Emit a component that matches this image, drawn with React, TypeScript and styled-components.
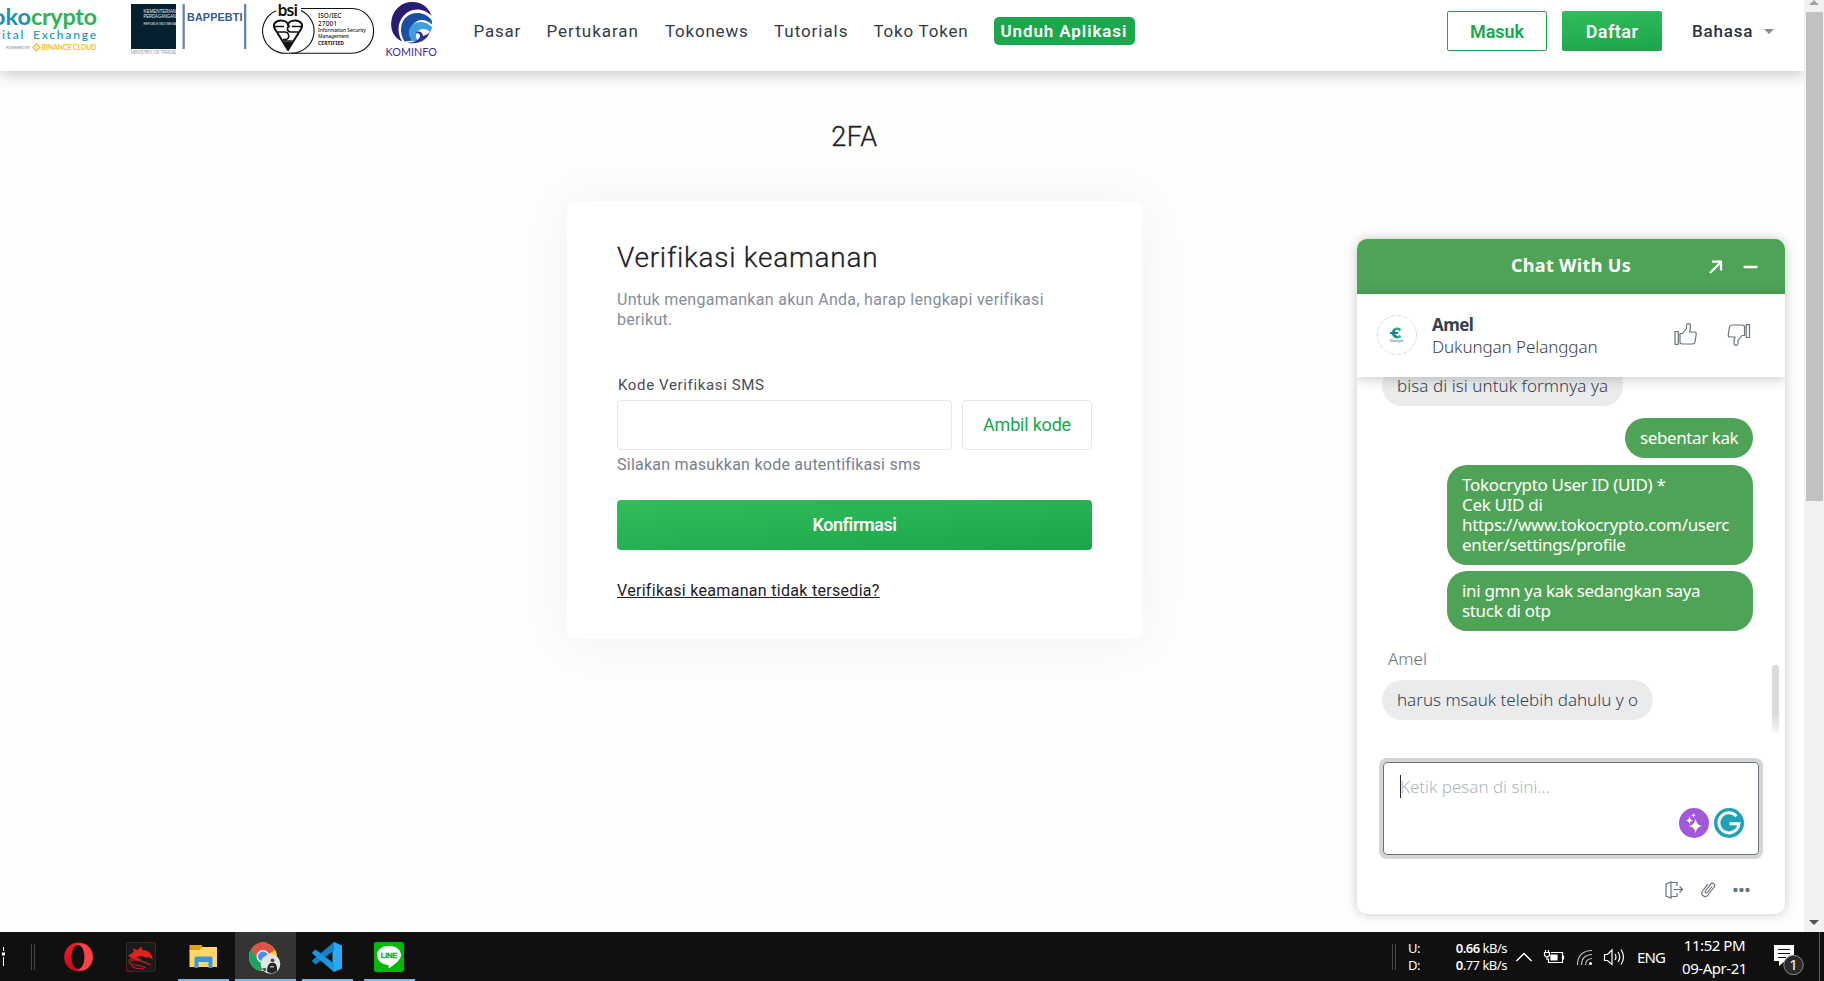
import React from "react";
import styled, { createGlobalStyle } from "styled-components";

const Global = createGlobalStyle`
  * { box-sizing: border-box; }
  body { margin: 0; background: #fefefe; overflow: hidden; }
`;

const sans = `Roboto, "Liberation Sans", sans-serif`;
const chatSans = `"Noto Sans", "Open Sans", sans-serif`;

const Screen = styled.div`
  width: 1824px;
  height: 981px;
  display: flex;
  flex-direction: column;
  font-family: ${sans};
  overflow: hidden;
`;

const Viewport = styled.div`
  position: relative;
  height: 932px;
  display: flex;
`;

const Page = styled.div`
  width: 1804px;
  overflow: hidden;
  background: #fefefe;
`;

/* ---------- header ---------- */

const Header = styled.header`
  position: relative;
  height: 71px;
  padding-right: 30px;
  display: flex;
  align-items: flex-start;
  background: #fff;
  box-shadow: 0 2px 16px rgba(0, 0, 0, 0.26);
`;

const Logos = styled.div`
  width: 473.5px;
  height: 62px;
  flex: none;
  display: flex;
`;

const LogoArt = styled.svg`
  flex: none;
  display: block;
  height: 62px;
`;

const Nav = styled.nav`
  height: 61px;
  flex: 1;
  display: flex;
  align-items: center;
`;

const NavLink = styled.a<{ $w: number; $ls: number }>`
  width: ${(p) => p.$w}px;
  flex: none;
  white-space: nowrap;
  font-size: 17px;
  letter-spacing: ${(p) => p.$ls}px;
  color: #343b49;
`;

const DownloadLink = styled.a`
  width: 141px;
  height: 28px;
  line-height: 28px;
  margin-top: 1px;
  padding-left: 7px;
  border-radius: 5px;
  background: #1ba74b;
  color: #fff;
  font-size: 17px;
  font-weight: 600;
  letter-spacing: 0.9px;
  white-space: nowrap;
`;

const Account = styled.div`
  height: 62px;
  display: flex;
  align-items: center;
`;

const AccountButton = styled.button<{ $solid?: boolean }>`
  width: 100px;
  height: 40px;
  margin-right: 15px;
  padding: 0;
  font: 600 18px ${sans};
  letter-spacing: ${(p) => (p.$solid ? "0.45px" : "0")};
  border-radius: 2px;
  border: ${(p) => (p.$solid ? "0" : "1px solid #1ba74b")};
  background: ${(p) => (p.$solid ? "linear-gradient(175deg, #31bd5b, #1ba54a)" : "#fff")};
  color: ${(p) => (p.$solid ? "#fff" : "#1ba74b")};
`;

const Language = styled.div`
  width: 82px;
  margin-left: 15px;
  display: flex;
  align-items: center;
  justify-content: space-between;
  font-size: 17px;
  font-weight: 500;
  letter-spacing: 0.8px;
  color: #2b3240;
`;

const Caret = styled.span`
  border: 5px solid transparent;
  border-top-color: #848e9c;
  border-bottom: 0;
`;

/* ---------- verification form ---------- */

const Content = styled.main`
  padding: 48px 95px 0 0;
  display: flex;
  flex-direction: column;
  align-items: center;
`;

const PageTitle = styled.h1`
  margin: 0 0 45px;
  font-size: 27px;
  line-height: 37px;
  font-weight: 300;
  letter-spacing: 0.5px;
  color: #1e2026;
  -webkit-text-stroke: 0.35px #1e2026;
`;

const Card = styled.section`
  width: 575px;
  height: 438px;
  padding: 39px 50px 0;
  border-radius: 7px;
  background: #fff;
  box-shadow: 0 2px 56px rgba(71, 77, 102, 0.08);
`;

const CardTitle = styled.h2`
  margin: 0;
  font-size: 28px;
  line-height: 36px;
  font-weight: 300;
  letter-spacing: 0.75px;
  color: #1e2026;
  -webkit-text-stroke: 0.3px #1e2026;
  font-feature-settings: "liga" 0;
`;

const Description = styled.p`
  margin: 14px 0 46px;
  font-size: 16px;
  line-height: 20px;
  letter-spacing: 0.31px;
  color: #848e9c;
`;

const FieldLabel = styled.label`
  display: block;
  margin: 0 0 5px 1px;
  font-size: 15px;
  line-height: 19px;
  letter-spacing: 0.64px;
  color: #474d57;
`;

const FieldRow = styled.div`
  display: flex;
  gap: 10px;
`;

const CodeInput = styled.input`
  width: 335px;
  height: 50px;
  border: 1px solid #e6e6e8;
  border-radius: 4px;
  background: #fff;
`;

const CodeButton = styled.button`
  width: 130px;
  height: 50px;
  padding: 0 0 2px;
  border: 1px solid #e6e6e8;
  border-radius: 4px;
  background: #fff;
  color: #1ba74b;
  font: 400 18px ${sans};
  letter-spacing: -0.2px;
`;

const Hint = styled.p`
  margin: 5px 0 25px;
  font-size: 16px;
  line-height: 20px;
  letter-spacing: 0.25px;
  color: #76808f;
`;

const ConfirmButton = styled.button`
  display: block;
  width: 475px;
  height: 50px;
  border: 0;
  border-radius: 4px;
  padding: 0 0 1px;
  background: linear-gradient(175deg, #31bd5b, #1ba54a);
  color: #fff;
  font: 600 18px ${sans};
  letter-spacing: -0.4px;
`;

const HelpLink = styled.a`
  display: inline-block;
  margin-top: 31px;
  font-size: 16px;
  line-height: 20px;
  letter-spacing: 0.3px;
  color: #1e2026;
  text-decoration: underline;
  text-decoration-skip-ink: none;
  text-decoration-thickness: 1px;
  text-underline-offset: 1px;
`;

/* ---------- browser scroll bar ---------- */

const ScrollBar = styled.aside`
  width: 20px;
  display: flex;
  flex-direction: column;
  align-items: center;
  background: #f1f1f1;
`;

const ScrollArrow = styled.span<{ $down?: boolean }>`
  border: 5px solid transparent;
  border-top: ${(p) => (p.$down ? "5px solid #505050" : "0")};
  border-bottom: ${(p) => (p.$down ? "0" : "5px solid #a3a3a3")};
  margin: ${(p) => (p.$down ? "auto 0 7px" : "0 0 7px")};
`;

const ScrollThumb = styled.span`
  width: 17px;
  height: 489px;
  margin-left: 1px;
  background: #c1c1c1;
`;

/* ---------- chat widget ---------- */

const Chat = styled.section`
  position: absolute;
  left: 1357px;
  top: 239px;
  width: 428px;
  height: 675px;
  display: flex;
  flex-direction: column;
  border-radius: 10px;
  overflow: hidden;
  background: #fff;
  font-family: ${chatSans};
  box-shadow: 0 0 12px rgba(0, 0, 0, 0.22);
`;

const ChatHeader = styled.header`
  height: 55px;
  flex: none;
  display: grid;
  grid-template-columns: 1fr auto 1fr;
  background: #4fa356;
  color: #fff;
`;

const ChatTitle = styled.h3`
  grid-column: 2;
  margin: 0;
  font-size: 18px;
  line-height: 52px;
  font-weight: 700;
  letter-spacing: 0.33px;
`;

const ChatControls = styled.div`
  display: flex;
  align-items: center;
  justify-content: flex-end;
  gap: 20px;
  padding-right: 27px;
`;

const AgentBar = styled.div`
  position: relative;
  z-index: 1;
  height: 83px;
  flex: none;
  display: flex;
  padding: 20px 34px 0 20px;
  background: #fff;
  box-shadow: 0 2px 12px rgba(0, 0, 0, 0.22);
`;

const Avatar = styled.svg`
  width: 40px;
  height: 40px;
  margin: 1px 15px 0 0;
`;

const AgentText = styled.div`
  flex: 1;
  font-size: 17px;
  line-height: 22px;
  color: #36414d;
`;

const AgentName = styled.div`
  font-weight: 700;
  letter-spacing: -0.6px;
`;

const AgentRole = styled.div`
  height: 20.5px;
  overflow: hidden;
  font-weight: 300;
  letter-spacing: -0.08px;
`;

const Votes = styled.div`
  display: flex;
  gap: 29px;
  padding-top: 9px;
`;

const Icon = styled.svg`
  display: block;
  flex: none;
`;

const Messages = styled.div`
  position: relative;
  height: 365px;
  flex: none;
  padding: 0 32px 0 25px;
  display: flex;
  flex-direction: column;
  overflow: hidden;
`;

const Bubble = styled.div<{ $mine?: boolean; $w: number; $top: number; $ls: number }>`
  flex: none;
  align-self: ${(p) => (p.$mine ? "flex-end" : "flex-start")};
  width: ${(p) => p.$w}px;
  margin-top: ${(p) => p.$top}px;
  padding: 10px 0 10px 15px;
  border-radius: 20px;
  background: ${(p) => (p.$mine ? "#4fa356" : "#e9ebed")};
  color: ${(p) => (p.$mine ? "#fff" : "#36414d")};
  font-size: 17px;
  line-height: 20px;
  font-weight: ${(p) => (p.$mine ? 400 : 300)};
  letter-spacing: ${(p) => p.$ls}px;
  white-space: nowrap;
`;

const Sender = styled.div`
  margin: 18px 0 11px 6px;
  flex: none;
  font-size: 17px;
  line-height: 20px;
  font-weight: 300;
  letter-spacing: 0;
  color: #68737d;
`;

const ChatThumb = styled.span`
  position: absolute;
  left: 415px;
  top: 288px;
  width: 7px;
  height: 67px;
  border-radius: 3px;
  background: linear-gradient(#d8dcde 75%, #f4f5f6);
`;

const Composer = styled.div`
  height: 93px;
  flex: none;
  margin: 20px 26px 0;
  padding: 12px 15px 0 16px;
  display: flex;
  flex-direction: column;
  border: 1px solid #68737d;
  border-radius: 4px;
  box-shadow: 0 0 0 4px #d4d5d5;
`;

const Placeholder = styled.div`
  height: 23px;
  border-left: 1px solid #222b33;
  text-indent: -1px;
  font-size: 17px;
  line-height: 24px;
  font-weight: 300;
  letter-spacing: -0.02px;
  color: #aeb6bc;
`;

const Assistants = styled.div`
  display: flex;
  justify-content: flex-end;
  gap: 5px;
  margin: 10px -1px 0 0;
`;

const ChatFooter = styled.footer`
  flex: 1;
  display: flex;
  justify-content: flex-end;
  align-items: center;
  gap: 17px;
  padding: 10px 35px 0 0;
`;

/* ---------- task bar ---------- */

const TaskBar = styled.footer`
  height: 49px;
  display: flex;
  background: #101010;
  color: #fff;
  font-family: ${chatSans};
`;

const TaskEdge = styled.div`
  width: 48.5px;
`;

const Apps = styled.div`
  flex: 1;
  display: flex;
  gap: 1px;
`;

const TaskApp = styled.div<{ $active?: boolean; $run?: boolean }>`
  width: 61px;
  height: 49px;
  display: flex;
  flex-direction: column;
  align-items: center;
  justify-content: space-between;
  padding-top: 10px;
  background: ${(p) => (p.$active ? "#343434" : "transparent")};

  &::after {
    content: "";
    width: ${(p) => (p.$active ? 61 : 51)}px;
    height: 2px;
    background: ${(p) => (p.$run ? "#76b9ed" : "transparent")};
  }
`;

const Tray = styled.div`
  width: 436px;
  display: flex;
  align-items: center;
  padding-top: 1px;

  > * { flex: none; }
`;

const TrayGrip = styled.span`
  width: 4px;
  height: 26px;
  margin: 0 12px 1px 4px;
  border: solid #484848;
  border-width: 0 1px;
`;

const Net = styled.dl`
  width: 99px;
  margin: 0 9px 0 0;
  display: grid;
  grid-template-columns: 1fr auto;
  font-size: 13px;
  line-height: 17px;
  letter-spacing: -0.5px;

  dt, dd { margin: 0; }
  b { font-weight: 600; }
`;

const TrayIcons = styled.svg`
  width: 110px;
  height: 24px;
  margin-right: 11px;
`;

const Lang = styled.span`
  width: 43px;
  font-size: 15px;
  letter-spacing: -0.9px;
`;

const Clock = styled.div`
  width: 69px;
  text-align: center;
  font-size: 15px;
  line-height: 23px;
  letter-spacing: -0.45px;
  white-space: nowrap;
`;

const Notifications = styled.svg`
  width: 34px;
  height: 36px;
  margin: 0 0 1px 24px;
`;

const DesktopEdge = styled.span`
  width: 1px;
  height: 49px;
  margin: -1px 0 0 12px;
  background: #5a5a5a;
`;

const Tokocrypto = () => (
  <LogoArt width="115" viewBox="0 0 115 62" fontFamily="Lato, sans-serif">
    <text x="31" y="25" textAnchor="end" fontSize="23.5" fontWeight="700" fill="#1b92b3">toko</text>
    <text x="31" y="25" textLength="66" fontSize="23.5" fontWeight="700" fill="#2db555">crypto</text>
    <text x="25" y="38.5" textAnchor="end" fontSize="12" fontWeight="600" letterSpacing="1.7" fill="#2c9dbb">Digital</text>
    <text x="33" y="38.5" textLength="63" fontSize="12" fontWeight="600" fill="#2c9dbb">Exchange</text>
    <text x="6" y="49" textLength="24" fontSize="4" fill="#888">POWERED BY</text>
    <g fill="none" stroke="#f5bd2c" strokeWidth="1.3">
      <path d="M36.5 44 40 47.4 36.5 50.8 33 47.4z" />
      <path d="M36.5 46.7v1.4" />
    </g>
    <text x="41.5" y="50" textLength="55" fontSize="6.8" fontWeight="700" fill="#f5bd2c">BINANCE CLOUD</text>
  </LogoArt>
);

const Bappebti = () => (
  <LogoArt width="145" viewBox="115 0 145 62" fontFamily="Liberation Sans, sans-serif">
    <path d="M131 4h45v45h-45z" fill="#052130" />
    <g fill="#e5edf0">
      <text x="143.5" y="13.3" textLength="32.5" lengthAdjust="spacingAndGlyphs" fontSize="5.8">KEMENTERIAN</text>
      <text x="143.5" y="18.2" textLength="32.5" lengthAdjust="spacingAndGlyphs" fontSize="5.8">PERDAGANGAN</text>
      <text x="143.5" y="25" textLength="32.5" lengthAdjust="spacingAndGlyphs" fontSize="4.2">REPUBLIK INDONESIA</text>
    </g>
    <text x="131" y="53.8" textLength="45" fontSize="4.6" fill="#8a979e">MINISTRY OF TRADE</text>
    <path d="M182.500 4h2.300v45h-2.300zM244 4h2.300v45h-2.300z" fill="#6884ab" />
    <text x="187" y="21" textLength="55.5" fontSize="10.8" fontWeight="700" fill="#365a92">BAPPEBTI</text>
  </LogoArt>
);

const Bsi = () => (
  <LogoArt width="120" viewBox="260 0 120 62" fontFamily="Noto Sans, sans-serif">
    <g fill="none" stroke="#111" strokeWidth="1.1">
      <path d="M301 8.5h51a21.500 22.300 0 0 1 0 44.800h-66a23.300 22.300 0 0 1-10-42.500" />
      <path d="M301 10.500a23 22.500 0 0 1-10 42.800" />
    </g>
    <text x="277.5" y="16" textLength="20.5" fontSize="16" fontWeight="600" fill="#111">bsi</text>
    <g fill="none" stroke="#111" strokeWidth="2" strokeLinejoin="round">
      <path d="M288 50 275 29c-3-5 1-8.500 6-8.500 4 0 7 2 7 5 0-3 3-5 7-5 5 0 9 3.500 6 8.500z" />
      <path d="M274 26.500h10M292 26.500h10M277.500 32h7M298 32h-7c-4 0-5-5-1-6M284.500 32c5 0 6 7 1 7.500h-2.500M283.500 41h9" strokeWidth="1.600" />
    </g>
    <path d="M283.500 42h9L288 50.500z" fill="#111" />
    <g fill="#222" fontWeight="500">
      <text x="318" y="17.500" textLength="23.500" fontSize="6.500">ISO/IEC</text>
      <text x="318" y="25.500" textLength="19" fontSize="6.500">27001</text>
      <text x="318" y="31.700" textLength="48" fontSize="5">Information Security</text>
      <text x="318" y="37.700" textLength="31" fontSize="5">Management</text>
      <text x="318" y="45.200" textLength="26" fontSize="5" fontWeight="700">CERTIFIED</text>
    </g>
  </LogoArt>
);

const Kominfo = () => (
  <LogoArt width="60" viewBox="380 0 60 62" fontFamily="Lato, sans-serif">
    <path d="M402 41.500C393 37 390 29 391.500 20 393.500 9 402 2 412 2c10.500 0 17 6 19.500 14-6-7-17-9-25-3-8.500 6.500-10.500 18-4.500 28.500z" fill="#2b1a72" />
    <path d="M404.500 41.500c-5.500-9-4.500-20 3-25.500 8-5.500 18.500-3 24 4 .500 1.500.500 3 .500 4.500-5-5-12-6-17-2-6 4.500-6.500 13-2 18z" fill="#1a4da4" />
    <path d="M412.500 41c-5-4.500-5-13 .500-16.800 6-4 14-2.400 19 2.800-.300 2-.700 3.500-1.500 5-4-3-8-4-11.500-1.500-4 3-4 8 0 11z" fill="#3f9fdb" />
    <path d="M405 42c6 1.500 12-.500 14.500-4 2-3.500-2-6.500-4.500-4 2.500-4.500 8-2.500 8 2 4-1 6-3 7-5-2 9-12 15-25 11z" fill="#30308a" />
    <text x="385.500" y="55.500" textLength="51.500" fontSize="10.800" fill="#3c3192">KOMINFO</text>
  </LogoArt>
);

const thumb =
  "M6 10.500h2.500l4-5V2.500c0-2.500 4-2.500 4 .500 0 2.500-.500 4.500-1 6h4.500c2 0 2.300 1 2.200 2.500l-1.200 7.500c-.300 1.700-1 2-2.500 2H9c-1.200 0-2-.500-3-1zM1 8.500h3.300v12.800H1z";

export default function App() {
  return (
    <Screen>
      <Global />
      <Viewport>
        <Page>
          <Header>
            <Logos>
              <Tokocrypto />
              <Bappebti />
              <Bsi />
              <Kominfo />
            </Logos>
            <Nav>
              <NavLink $w={73} $ls={0.8}>Pasar</NavLink>
              <NavLink $w={118.5} $ls={0.98}>Pertukaran</NavLink>
              <NavLink $w={109} $ls={0.78}>Tokonews</NavLink>
              <NavLink $w={99.5} $ls={0.95}>Tutorials</NavLink>
              <NavLink $w={120} $ls={0.78}>Toko Token</NavLink>
              <DownloadLink>Unduh Aplikasi</DownloadLink>
            </Nav>
            <Account>
              <AccountButton>Masuk</AccountButton>
              <AccountButton $solid>Daftar</AccountButton>
              <Language>Bahasa<Caret /></Language>
            </Account>
          </Header>
          <Content>
            <PageTitle>2FA</PageTitle>
            <Card>
              <CardTitle>Verifikasi keamanan</CardTitle>
              <Description>
                Untuk mengamankan akun Anda, harap lengkapi verifikasi
                <br />
                berikut.
              </Description>
              <FieldLabel>Kode Verifikasi SMS</FieldLabel>
              <FieldRow>
                <CodeInput />
                <CodeButton>Ambil kode</CodeButton>
              </FieldRow>
              <Hint>Silakan masukkan kode autentifikasi sms</Hint>
              <ConfirmButton>Konfirmasi</ConfirmButton>
              <HelpLink>Verifikasi keamanan tidak tersedia?</HelpLink>
            </Card>
          </Content>
        </Page>
        <ScrollBar>
          <ScrollArrow />
          <ScrollThumb />
          <ScrollArrow $down />
        </ScrollBar>

        <Chat>
          <ChatHeader>
            <ChatTitle>Chat With Us</ChatTitle>
            <ChatControls>
              <Icon width="14" height="14" viewBox="0 0 14 14" fill="none" stroke="#fff" strokeWidth="2.300">
                <path d="M1 13 12 2M3 1.700H12V10.500" />
              </Icon>
              <Icon width="15" height="14" viewBox="0 0 15 14">
                <path d="M1.500 7h12" stroke="#fff" strokeWidth="2.300" strokeLinecap="round" />
              </Icon>
            </ChatControls>
          </ChatHeader>
          <AgentBar>
            <Avatar viewBox="0 0 40 40">
              <circle cx="20" cy="20" r="19.500" fill="#fff" stroke="#d8dcde" strokeDasharray="5 1.500" />
              <path d="M23.500 15.300a4.300 4.300 0 1 0 0 5.400" fill="none" stroke="#2db366" strokeWidth="2.400" />
              <path d="M13 18h8M17 14.500v3.500a4 4 0 0 0 3 4" fill="none" stroke="#197fa8" strokeWidth="2" />
              <text x="12.500" y="26.800" textLength="14" fontSize="3" fontWeight="700" fill="#45a5ad" fontFamily="Lato, sans-serif">Tokocrypto</text>
            </Avatar>
            <AgentText>
              <AgentName>Amel</AgentName>
              <AgentRole>Dukungan Pelanggan</AgentRole>
            </AgentText>
            <Votes>
              <Icon width="24" height="24" viewBox="0 0 24 24" fill="none" stroke="#68737d" strokeWidth="1.200" strokeLinejoin="round">
                <path d={thumb} />
              </Icon>
              <Icon width="24" height="24" viewBox="0 0 24 24" fill="none" stroke="#68737d" strokeWidth="1.200" strokeLinejoin="round">
                <path d={thumb} transform="rotate(180 11.750 11.500)" />
              </Icon>
            </Votes>
          </AgentBar>
          <Messages>
            <Bubble $w={241} $top={-11} $ls={0.06}>bisa di isi untuk formnya ya</Bubble>
            <Bubble $mine $w={128} $top={12} $ls={-0.4}>sebentar kak</Bubble>
            <Bubble $mine $w={306} $top={7} $ls={-0.32}>
              Tokocrypto User ID (UID) *<br />
              Cek UID di<br />
              https://www.tokocrypto.com/userc<br />
              enter/settings/profile
            </Bubble>
            <Bubble $mine $w={306} $top={6} $ls={-0.33}>
              ini gmn ya kak sedangkan saya<br />
              stuck di otp
            </Bubble>
            <Sender>Amel</Sender>
            <Bubble $w={271} $top={0} $ls={-0.01}>harus msauk telebih dahulu y o</Bubble>
            <ChatThumb />
          </Messages>
          <Composer>
            <Placeholder>Ketik pesan di sini...</Placeholder>
            <Assistants>
              <Icon width="30" height="30" viewBox="0 0 30 30">
                <circle cx="15" cy="15" r="15" fill="#a259d9" />
                <path
                  d="M16.500 10.500q.800 6.700 6.500 7.500-5.700.800-6.500 7.500-.800-6.700-6.500-7.500 5.700-.800 6.500-7.500zM10.500 8q.500 4 3.500 4.500-3 .500-3.500 4-.500-3.500-3.500-4 3-.500 3.500-4.500zM14.500 5q.300 2.200 2.200 2.500-1.900.300-2.200 2.500-.300-2.200-2.200-2.500 1.900-.300 2.200-2.500z"
                  fill="#fff"
                />
              </Icon>
              <Icon width="30" height="30" viewBox="0 0 30 30">
                <circle cx="15" cy="15" r="15" fill="#1fa2b8" />
                <path d="M22.500 8.300a10 10 0 1 0 2.400 7.500h-9.400" fill="none" stroke="#fff" strokeWidth="3" />
              </Icon>
            </Assistants>
          </Composer>
          <ChatFooter>
            <Icon width="19" height="18" viewBox="0 0 19 18" fill="none" stroke="#68737d" strokeWidth="1.200">
              <path d="M1 3 6 1v16l-5-2zM6 1.500h6V5M6 15.500h6V12M8.500 8.500h9M14.500 5.500l3 3-3 3" />
            </Icon>
            <Icon width="15" height="17" viewBox="0 0 15 17" fill="none" stroke="#68737d" strokeWidth="1.200" strokeLinecap="round">
              <path d="M10.500 6 6.300 11.500c-1 1.300-3-.200-2-1.500L9.500 3.300c2-2.500 5.500.200 3.600 2.700L7 14c-3 3.800-8.300-.200-5.400-4L6.500 3.600" />
            </Icon>
            <Icon width="17" height="6" viewBox="0 0 17 6" fill="#68737d">
              <circle cx="2.500" cy="3" r="2.200" />
              <circle cx="8.500" cy="3" r="2.200" />
              <circle cx="14.500" cy="3" r="2.200" />
            </Icon>
          </ChatFooter>
        </Chat>
      </Viewport>

      <TaskBar>
        <TaskEdge>
          <Icon width="48" height="49" viewBox="0 0 48 49">
            <path d="M3 15h1v4H3zM2 20.500h3v3H2zM3 25h1v9H3z" fill="#fff" />
            <path d="M31 12h1v26h-1zM34 12h1v26h-1z" fill="#484848" />
          </Icon>
        </TaskEdge>
        <Apps>
          <TaskApp>
            <Icon width="30" height="30" viewBox="0 0 30 30">
              <defs>
                <linearGradient id="opera" x1="0" y1="0" x2=".5" y2="1">
                  <stop offset="0" stopColor="#ff1b2d" />
                  <stop offset="1" stopColor="#b00c18" />
                </linearGradient>
              </defs>
              <ellipse cx="14.500" cy="15" rx="14.300" ry="14.500" fill="url(#opera)" />
              <path d="M9.500 5C18-3 28.800 4 28.800 15S18 33 9.500 25c8 4 10.500-4 10.500-10S17.500 1 9.500 5z" fill="#fa4248" />
              <ellipse cx="14" cy="15" rx="6.500" ry="12" fill="#101010" />
            </Icon>
          </TaskApp>
          <TaskApp>
            <Icon width="30" height="30" viewBox="0 0 30 30">
              <rect width="30" height="30" rx="3" fill="#2a2a2a" />
              <path d="M20 0h7a3 3 0 0 1 3 3v7zM0 22v5a3 3 0 0 0 3 3h6z" fill="#7b1017" />
              <rect x="1" y="1" width="28" height="28" rx="3" fill="#1a1a1a" />
              <path d="M2 13q4-1 6-3.500L6.500 6.500 12 8l3-3.500 1.500 3.500q7 .500 9 5l1.500 4.500-4.500-2.500-2 1-4.500-2q-4-.500-5.500 1.500l5 2q-7 1-12.500-3z" fill="#e2231c" />
              <path d="M13 17.500C5 15 1.500 18 3.500 21s12 1.500 16 5M5 20c0-4 10-2 20 3M6 22.500c-1 3 4 4 12 4.500" fill="none" stroke="#cf1f1b" strokeWidth="1.100" />
            </Icon>
          </TaskApp>
          <TaskApp $run>
            <Icon width="30" height="30" viewBox="0 0 30 30">
              <path d="M1.500 3h12l2 3H29v3H1.500z" fill="#e5a00d" />
              <path d="M1.500 8h10l3-3H29v20H1.500z" fill="#ffd766" />
              <path d="M6.500 26V16q0-1.500 1.500-1.500h15q1.500 0 1.500 1.500v10h-4v-6h-10v6z" fill="#3a95df" />
            </Icon>
          </TaskApp>
          <TaskApp $run $active>
            <Icon width="32" height="33" viewBox="0 0 32 33">
              <circle cx="14" cy="15" r="14" fill="#ffcd42" />
              <path d="M14 15 1.900 8A14 14 0 0 1 26.100 8z" fill="#de5547" />
              <path d="M14 15 1.900 8a14 14 0 0 0 10 20.900l7-10.900z" fill="#1da362" />
              <path d="M2 8q6-10 16-7.500L14 9l-5 8z" fill="#de5547" />
              <circle cx="14" cy="14.500" r="6.500" fill="#f4f4f4" />
              <circle cx="14" cy="14.500" r="5" fill="#4a8bf5" />
              <circle cx="21.500" cy="22" r="9.800" fill="#e0e6e8" />
              <path d="M18 29.500q0-7 3.500-8.500h4q3 2 2.500 8-5 4-10 .500z" fill="#20262b" />
              <path d="M13 26h4v3h-2z" fill="#555d61" />
              <circle cx="23.500" cy="18.500" r="2" fill="#59483f" />
              <path d="M21 24h4v1.500h-4z" fill="#dca84e" />
            </Icon>
          </TaskApp>
          <TaskApp $run>
            <Icon width="30" height="30" viewBox="0 0 30 30">
              <path d="M22 0 30 3.500v23L22 30 20.500 28.500V1.500z" fill="#2aa8f2" />
              <path d="M22 0v8.500L3.500 22.500.300 19.500v-1.200z" fill="#1380ca" />
              <path d="M22 30v-8.500L3.500 7.500.300 10.300v1.300z" fill="#1b96de" />
            </Icon>
          </TaskApp>
          <TaskApp $run>
            <Icon width="30" height="30" viewBox="0 0 30 30">
              <rect width="30" height="30" rx="2" fill="#00b900" />
              <path d="M15 3.800c6.500 0 12 4 12 9.200 0 5-6 9-11.500 13-1 .500-1-.500-.800-2.800C8 22.800 3 18.500 3 13c0-5.200 5.500-9.200 12-9.200z" fill="#fff" />
              <text x="6.800" y="16" textLength="16.500" fontSize="7.500" fontWeight="700" fill="#00b900" stroke="#00b900" strokeWidth=".3" fontFamily="Liberation Sans, sans-serif">LINE</text>
            </Icon>
          </TaskApp>
        </Apps>
        <Tray>
          <TrayGrip />
          <Net>
            <dt>U:</dt>
            <dd><b>0.66</b> kB/s</dd>
            <dt>D:</dt>
            <dd><b>0</b>.77 kB/s</dd>
          </Net>
          <TrayIcons viewBox="1516 945 110 24" fill="none" stroke="#fff" strokeWidth="1.200">
            <path d="M1516.500 961l7.500-7.500 7.500 7.500" strokeWidth="1.500" />
            <path d="M1551 952.500h11.500v10h-14v-4M1563.500 955.500v4M1544.500 952.500h5v3q-2.500 3-5 0zM1545.500 950v2M1548.500 950v2M1547 957v3" />
            <path d="M1551 955h6v5h-6z" fill="#fff" />
            <path d="M1577.500 965q0-14 14.500-14.500M1581.500 965q0-10 10.500-10.500M1585.500 965q0-6 6.500-6.500" stroke="#bbb" />
            <circle cx="1590.500" cy="963.500" r="1.500" fill="#fff" stroke="none" />
            <path d="M1604.500 954.500h3l4.500-4.500v14.500l-4.500-4h-3zM1615 954q2 3 0 6M1618 952q3.500 5 0 10M1621 949.500q5 7.500 0 15" />
          </TrayIcons>
          <Lang>ENG</Lang>
          <Clock>
            11:52 PM
            <br />
            09-Apr-21
          </Clock>
          <Notifications viewBox="0 0 34 36">
            <path d="M1 6h20v16H12l-6 5v-5H1z" fill="#fff" />
            <path d="M5 10.500h12M5 14.500h12M5 18.500h8" stroke="#111" strokeWidth="1.200" />
            <circle cx="20.500" cy="26" r="9.700" fill="#2b2b2b" stroke="#8b8b8b" />
            <text x="20.500" y="31.200" textAnchor="middle" fontSize="15" fill="#fff" fontFamily="Noto Sans, sans-serif">1</text>
          </Notifications>
          <DesktopEdge />
        </Tray>
      </TaskBar>
    </Screen>
  );
}
